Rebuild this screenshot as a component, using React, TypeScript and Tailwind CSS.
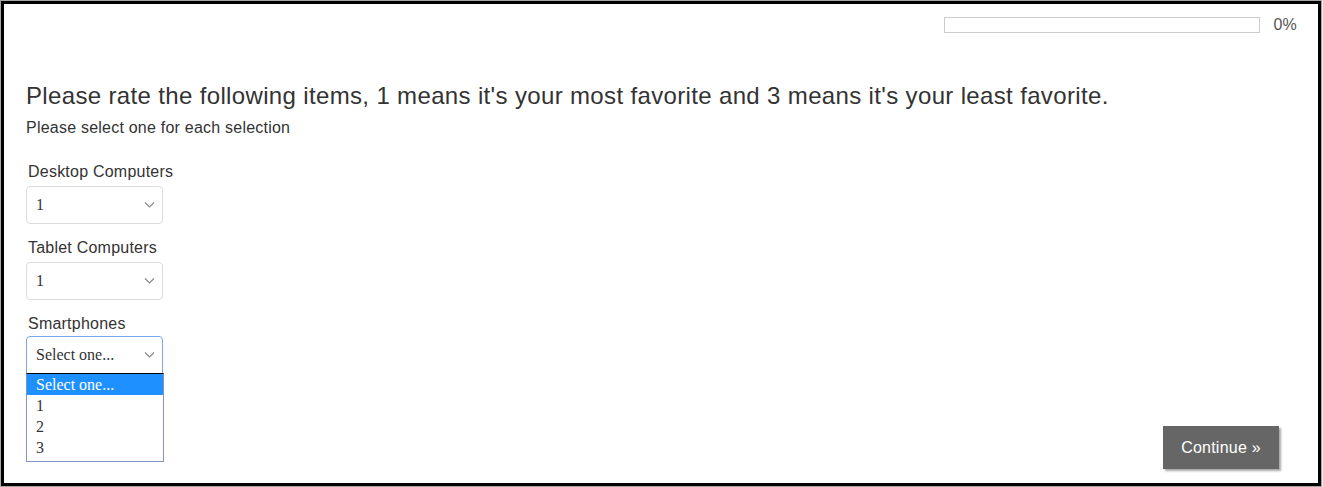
import React from "react";

const Chevron = () => (
  <svg width="11" height="7" viewBox="0 0 11 7" className="absolute right-[7px] top-1/2 -translate-y-1/2">
    <polyline points="1,1 5.5,5.5 10,1" fill="none" stroke="#888" strokeWidth="1.2" />
  </svg>
);

function FakeSelect({ value, focused, children }: { value: string; focused?: boolean; children?: React.ReactNode }) {
  return (
    <div
      className={
        "relative w-[137px] h-[38px] rounded-[4px] bg-white border " +
        (focused ? "border-[#7aa7ea] rounded-b-none" : "border-[#dcdcdc]")
      }
    >
      <div className="absolute left-[9px] top-0 h-full flex items-center text-[16px] tracking-normal text-[#333] [font-family:'Liberation_Serif','Times_New_Roman',serif]">
        {value}
      </div>
      <Chevron />
      {children}
    </div>
  );
}

export default function App() {
  const sans = "[font-family:'Liberation_Sans',Arial,sans-serif]";
  return (
    <div className={"w-[1323px] h-[487px] bg-white tracking-[0.014em] " + sans}>
      <div className="ml-px mt-px w-[1320px] h-[485px] border-[3px] border-black shadow-[0_0_1px_1px_rgba(0,0,0,0.35)]">
        <div className="flex flex-col h-full pl-[22px] pr-[21px] pt-[13px] pb-[14px]">
          <div className="flex justify-end items-center gap-[13px]">
            <div className="w-[316px] h-[16px] border border-[#cccccc] bg-white" />
            <span className="text-[16px] leading-[16px] text-[#555]">0%</span>
          </div>
          <h1 className="mt-[50px] text-[24px] leading-[26px] tracking-[0.35px] text-[#333] font-normal">
            Please rate the following items, 1 means it's your most favorite and 3 means it's your least favorite.
          </h1>
          <p className="mt-[7px] text-[16px] leading-[24px] text-[#333]">Please select one for each selection</p>
          <div className="mt-[20px] flex flex-col gap-[12px]">
            <div>
              <div className="text-[16px] leading-[24px] text-[#333] pl-[2px] mb-[2px]">Desktop Computers</div>
              <FakeSelect value="1" />
            </div>
            <div>
              <div className="text-[16px] leading-[24px] text-[#333] pl-[2px] mb-[2px]">Tablet Computers</div>
              <FakeSelect value="1" />
            </div>
            <div>
              <div className="text-[16px] leading-[24px] text-[#333] pl-[2px]">Smartphones</div>
              <FakeSelect value="Select one..." focused>
                <div className="absolute left-[-1px] top-[36px] w-[138px] h-[89px] bg-white border border-[#7f94c8] border-t-black z-10 [font-family:'Liberation_Serif','Times_New_Roman',serif] tracking-normal text-[16px] text-[#333]">
                  <div className="h-[21px] leading-[21px] pl-[9px] bg-[#1e90ff] text-white">Select one...</div>
                  <div className="h-[21px] leading-[21px] pl-[9px]">1</div>
                  <div className="h-[21px] leading-[21px] pl-[9px]">2</div>
                  <div className="h-[21px] leading-[21px] pl-[9px]">3</div>
                </div>
              </FakeSelect>
            </div>
          </div>
          <div className="mt-auto flex justify-end">
            <button className="mr-[18px] w-[116px] h-[43px] bg-[#666] text-white text-[16px] shadow-[2px_2px_2px_rgba(0,0,0,0.35)]">
              Continue »
            </button>
          </div>
        </div>
      </div>
    </div>
  );
}
